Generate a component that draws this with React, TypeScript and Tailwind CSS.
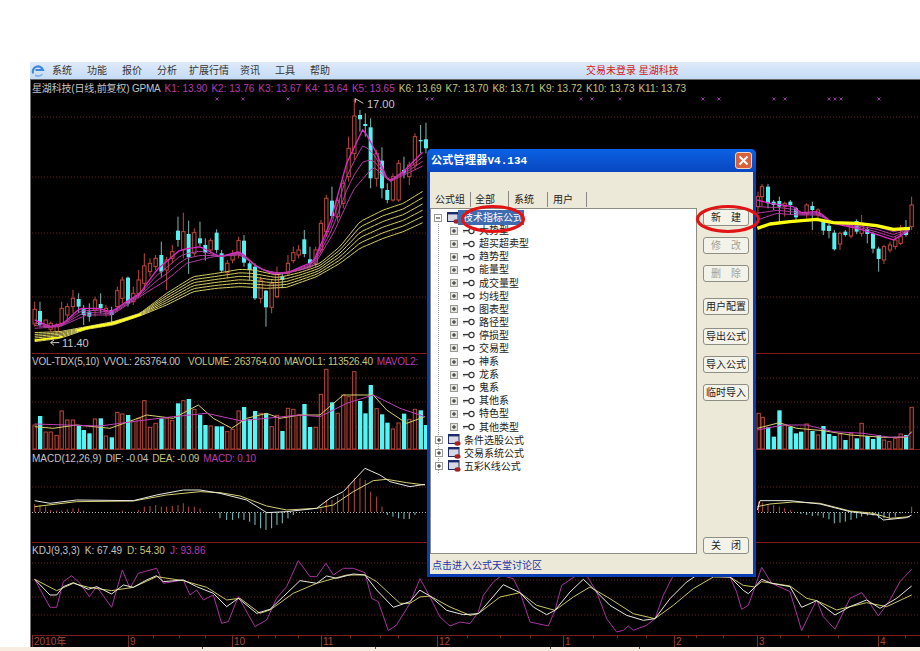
import React from "react";

// chart data is kept in a 3x grid so the small wicks and bars stay whole numbers
type Candle = [number, number, number, number, number]; // x, wick top, body top, body bottom, wick bottom
type Bar = [number, number]; // x, top

const redCandlesLeft: Candle[] = [
  [104, 755, 778, 822, 830], [137, 810, 810, 830, 835], [152, 815, 820, 838, 845], [170, 820, 825, 845, 850],
  [185, 755, 775, 820, 830], [202, 760, 770, 795, 815], [219, 720, 745, 770, 790], [285, 740, 750, 780, 800],
  [318, 765, 775, 785, 800], [352, 710, 722, 770, 785], [367, 680, 690, 745, 760], [400, 710, 730, 755, 765],
  [416, 660, 690, 730, 745], [433, 610, 648, 700, 720], [450, 625, 640, 665, 680], [467, 615, 625, 650, 660],
  [500, 620, 630, 660, 720], [517, 585, 605, 625, 640], [550, 488, 545, 600, 625], [583, 535, 548, 610, 620],
  [632, 565, 572, 600, 610], [682, 630, 640, 668, 685], [698, 600, 610, 630, 640], [716, 560, 572, 610, 625],
  [782, 680, 690, 745, 760], [815, 690, 700, 772, 790], [831, 650, 672, 740, 745], [864, 615, 640, 670, 675],
  [880, 590, 608, 632, 640], [896, 585, 600, 615, 625], [947, 590, 600, 640, 650], [963, 510, 520, 600, 610],
  [979, 435, 445, 545, 560], [1013, 440, 452, 500, 515], [1030, 390, 400, 460, 475], [1046, 260, 295, 380, 395],
  [1063, 145, 198, 310, 330], [1130, 300, 310, 385, 410], [1179, 370, 380, 450, 455], [1196, 330, 340, 450, 455],
  [1228, 335, 345, 380, 405], [1245, 250, 260, 345, 360],
];

const cyanCandlesLeft: Candle[] = [
  [120, 755, 783, 825, 830], [236, 730, 747, 770, 790], [251, 765, 778, 795, 825], [268, 760, 785, 800, 815],
  [302, 730, 762, 775, 790], [335, 770, 780, 795, 820], [384, 680, 683, 760, 770], [484, 575, 615, 665, 680],
  [534, 500, 542, 570, 590], [566, 512, 552, 622, 672], [600, 515, 565, 580, 590], [616, 565, 585, 608, 632],
  [650, 538, 548, 600, 610], [665, 600, 610, 662, 668], [732, 555, 572, 638, 650], [749, 630, 640, 660, 690],
  [765, 640, 650, 745, 750], [798, 720, 722, 772, 830], [847, 672, 680, 690, 715], [913, 540, 568, 612, 622],
  [930, 590, 628, 640, 650], [996, 410, 452, 498, 505], [1080, 180, 195, 208, 245], [1096, 190, 222, 228, 260],
  [1112, 205, 232, 385, 415], [1146, 292, 332, 415, 445], [1162, 400, 420, 450, 460], [1212, 320, 360, 370, 385],
  [1262, 225, 270, 272, 310], [1278, 218, 268, 295, 310],
];

const redCandlesRight: Candle[] = [
  [24, 395, 410, 440, 460], [36, 372, 380, 410, 440], [104, 425, 430, 440, 470], [170, 430, 435, 460, 475],
  [204, 445, 450, 465, 480], [270, 515, 520, 552, 570], [303, 490, 495, 528, 535], [335, 465, 490, 520, 530],
  [402, 555, 560, 600, 612], [420, 545, 555, 570, 578], [436, 530, 540, 560, 568], [452, 495, 530, 550, 555],
  [485, 410, 435, 500, 510],
];

const cyanCandlesRight: Candle[] = [
  [54, 372, 380, 430, 445], [71, 420, 425, 435, 450], [88, 410, 423, 440, 485], [121, 420, 425, 435, 465],
  [138, 440, 445, 472, 480], [187, 425, 438, 450, 510], [220, 480, 485, 512, 525], [237, 490, 497, 513, 535],
  [253, 510, 518, 568, 572], [286, 510, 515, 525, 530], [320, 478, 483, 515, 522], [352, 500, 507, 522, 550],
  [369, 515, 520, 566, 580], [386, 560, 566, 597, 635], [468, 480, 515, 525, 530],
];

const volRedLeft: Bar[] = [
  [104, 225], [137, 246], [152, 246], [170, 256], [185, 183], [202, 210], [219, 210], [285, 207], [318, 258],
  [352, 187], [367, 192], [400, 214], [416, 205], [433, 152], [450, 232], [467, 220], [500, 205], [517, 212],
  [550, 152], [583, 178], [632, 228], [682, 245], [698, 238], [716, 183], [782, 190], [815, 230], [831, 196],
  [864, 175], [880, 178], [896, 195], [947, 232], [963, 133], [979, 58], [1013, 190], [1030, 135], [1046, 140],
  [1063, 65], [1130, 176], [1179, 237], [1196, 219], [1228, 208], [1245, 178],
];

const volCyanLeft: Bar[] = [
  [120, 198], [236, 225], [251, 240], [268, 250], [302, 205], [335, 262], [384, 195], [484, 205], [534, 160],
  [566, 147], [600, 195], [616, 225], [650, 229], [665, 229], [732, 171], [749, 207], [765, 183], [798, 190],
  [847, 243], [913, 162], [930, 231], [996, 157], [1080, 153], [1096, 190], [1112, 105], [1146, 193], [1162, 218],
  [1212, 191], [1262, 181], [1278, 225],
];

const volRedRight: Bar[] = [
  [26, 190], [38, 202], [104, 225], [170, 222], [204, 255], [270, 252], [303, 250], [335, 220], [402, 270],
  [418, 275], [436, 265], [452, 252], [485, 172],
];

const volCyanRight: Bar[] = [
  [54, 232], [71, 260], [88, 181], [121, 230], [138, 250], [153, 245], [187, 243], [220, 228], [237, 252],
  [253, 258], [286, 270], [320, 265], [352, 258], [369, 267], [386, 255], [468, 255],
];

const macdRedLeft: Bar[] = [
  [104, 462], [120, 465], [137, 470], [152, 480], [170, 482], [185, 482], [202, 478], [219, 475], [236, 475],
  [251, 482], [268, 485], [367, 482], [416, 480], [433, 470], [450, 468], [467, 465], [484, 470], [500, 470],
  [517, 468], [534, 465], [550, 460], [566, 470], [583, 470], [600, 475], [963, 475], [979, 450], [996, 450],
  [1013, 440], [1030, 430], [1046, 405], [1063, 385], [1080, 385], [1096, 390], [1112, 425], [1130, 440], [1146, 470],
];

const macdCyanLeft: Bar[] = [
  [660, 505], [680, 510], [698, 510], [716, 505], [732, 510], [749, 515], [765, 525], [782, 535], [798, 540],
  [815, 535], [831, 525], [847, 520], [864, 505], [880, 495], [1162, 495], [1179, 500], [1196, 505], [1212, 507],
  [1228, 507], [1245, 495],
];

const macdRedRight: Bar[] = [[26, 455], [38, 458], [54, 462], [71, 465], [88, 470], [104, 475], [121, 480], [485, 470]];

const macdCyanRight: Bar[] = [
  [153, 492], [170, 495], [187, 498], [204, 497], [220, 503], [237, 508], [253, 520], [270, 518], [286, 515],
  [303, 510], [320, 505], [335, 500], [352, 497], [369, 497], [386, 505], [402, 505], [418, 505], [436, 500], [452, 490],
];

const yellowTop = [104, 848, 180, 845, 260, 830, 340, 815, 420, 790, 500, 730, 580, 680, 650, 670, 720, 658, 760, 660, 830, 675, 900, 660, 960, 640, 1020, 590, 1080, 515, 1150, 480, 1210, 460, 1275, 420];
const yellowBottom = [104, 875, 180, 865, 260, 838, 340, 825, 420, 798, 500, 765, 580, 725, 650, 715, 720, 710, 800, 715, 860, 712, 950, 680, 1020, 640, 1080, 595, 1150, 565, 1210, 545, 1275, 515];
const maFast = [104, 810, 150, 830, 190, 820, 240, 775, 290, 775, 335, 785, 380, 755, 420, 730, 470, 660, 540, 600, 600, 590, 660, 620, 720, 605, 770, 650, 820, 672, 870, 665, 940, 635, 990, 520, 1040, 340, 1090, 235, 1130, 310, 1165, 395, 1210, 365, 1275, 300];
const maSlow = [104, 835, 180, 830, 260, 795, 335, 795, 420, 740, 500, 690, 560, 640, 640, 620, 720, 615, 790, 660, 850, 672, 940, 650, 1000, 550, 1060, 420, 1120, 350, 1170, 395, 1275, 345];
const maFastRight = [22, 420, 60, 430, 130, 440, 150, 458, 205, 455, 250, 490, 320, 505, 370, 520, 430, 540, 480, 510];
const maSlowRight = [22, 480, 80, 460, 140, 465, 205, 465, 250, 488, 320, 492, 380, 500, 430, 515, 480, 505];
const yellowRight = [22, 505, 60, 492, 120, 485, 200, 478, 250, 488, 320, 490, 380, 497, 430, 508, 480, 505];

const kdjLeft = {
  j: [104, 688, 150, 772, 170, 772, 190, 695, 215, 677, 240, 700, 268, 740, 290, 710, 335, 772, 367, 660, 390, 715, 415, 670, 470, 655, 490, 700, 550, 690, 570, 735, 590, 720, 610, 750, 640, 735, 665, 820, 685, 815, 715, 740, 765, 830, 800, 810, 830, 745, 860, 710, 895, 632, 930, 680, 950, 680, 978, 640, 1000, 675, 1030, 655, 1060, 655, 1095, 668, 1115, 745, 1135, 755, 1165, 842, 1190, 825, 1230, 760, 1260, 686],
  k: [104, 688, 150, 735, 170, 735, 190, 710, 220, 698, 265, 718, 290, 710, 335, 732, 370, 705, 400, 712, 440, 690, 470, 677, 490, 695, 550, 690, 590, 710, 640, 730, 680, 770, 715, 745, 770, 790, 810, 778, 850, 740, 900, 692, 950, 700, 980, 678, 1010, 685, 1060, 672, 1095, 675, 1130, 720, 1180, 772, 1230, 755, 1260, 720],
  d: [104, 688, 170, 722, 220, 700, 265, 712, 335, 722, 400, 712, 470, 680, 550, 692, 620, 712, 680, 750, 720, 745, 780, 790, 810, 780, 880, 730, 950, 700, 1040, 675, 1095, 675, 1130, 695, 1200, 760, 1230, 760, 1260, 741],
};

const kdjMiddle = {
  j: [0, 20, 30, 75, 60, 135, 90, 162, 120, 150, 150, 155, 175, 120, 190, 70, 220, 30, 245, 10, 280, 20, 300, 60, 330, 150, 385, 162, 405, 115, 425, 40, 470, 10, 500, 10, 530, 60, 560, 140, 590, 180, 610, 175, 625, 162, 640, 175, 680, 160, 705, 140, 730, 70, 760, 10, 930, 15, 950, 60, 965, 112, 985, 100, 1005, 45],
  k: [0, 55, 30, 72, 80, 115, 130, 128, 175, 125, 210, 85, 250, 38, 300, 62, 340, 105, 380, 128, 405, 115, 450, 60, 490, 22, 520, 50, 570, 100, 620, 130, 670, 145, 705, 140, 750, 80, 800, 30, 830, 10, 930, 15, 970, 55, 985, 65, 1005, 45],
  d: [0, 75, 30, 72, 90, 105, 150, 130, 175, 125, 240, 75, 300, 62, 350, 100, 405, 115, 460, 75, 510, 45, 570, 80, 640, 125, 705, 140, 760, 100, 820, 50, 880, 15, 930, 15, 970, 40, 1005, 45],
};

const kdjRight = {
  j: [15, 711, 35, 652, 65, 700, 120, 725, 155, 842, 175, 800, 200, 750, 220, 800, 255, 838, 300, 745, 335, 728, 360, 760, 385, 798, 420, 750, 450, 695, 485, 658],
  k: [15, 711, 35, 688, 65, 700, 120, 710, 155, 772, 200, 752, 255, 795, 300, 770, 350, 750, 390, 775, 440, 745, 485, 708],
  d: [15, 711, 35, 695, 120, 708, 170, 745, 200, 752, 260, 780, 350, 758, 410, 770, 485, 735],
};

const crossMarks = [217, 243, 288, 427, 432, 581, 592, 620, 703, 719, 774, 785, 829, 835, 841, 879];
const monthMarks: [number, string][] = [[128, "9"], [232, "10"], [321, "11"], [437, "12"], [563, "1"], [674, "2"], [757, "3"], [878, "4"]];
const axisTicks = [153, 179, 205, 258, 275, 298, 350, 380, 398, 467, 500, 530, 593, 617, 646, 696, 723, 780, 808, 838, 905];

const pts = (flat: number[]) => flat.reduce((s, v, i) => s + (i % 2 ? "," : " ") + v, "").trim();

// y of a polyline at x, used to fan a ribbon of averages between two curves
const yAt = (flat: number[], x: number) => {
  for (let i = 0; i < flat.length - 2; i += 2) {
    if (x <= flat[i + 2]) {
      const t = Math.max(0, (x - flat[i]) / (flat[i + 2] - flat[i]));
      return flat[i + 1] + (flat[i + 3] - flat[i + 1]) * t;
    }
  }
  return flat[flat.length - 1];
};

const ribbon = (a: number[], b: number[], t: number, from: number, to: number) => {
  const out: number[] = [];
  for (let x = from; x <= to; x += 12) out.push(x, yAt(a, x) + (yAt(b, x) - yAt(a, x)) * t);
  return out;
};

const Line = ({ d, color, w = 3 }: { d: number[]; color: string; w?: number }) => (
  <polyline points={pts(d)} fill="none" stroke={color} strokeWidth={w} strokeLinejoin="round" />
);

const Candles = ({ red, cyan }: { red: Candle[]; cyan: Candle[] }) => (
  <>
    {red.map(([x, wt, bt, bb, wb]) => (
      <g key={x}>
        <line x1={x} x2={x} y1={wt} y2={wb} stroke="#c04a3a" strokeWidth={3} />
        <rect x={x - 5} y={bt} width={10} height={bb - bt} fill="#000" stroke="#c04a3a" strokeWidth={3} />
      </g>
    ))}
    {cyan.map(([x, wt, bt, bb, wb]) => (
      <g key={x}>
        <line x1={x} x2={x} y1={wt} y2={wb} stroke="#7fb8b8" strokeWidth={3} />
        <rect x={x - 6} y={bt} width={12} height={Math.max(bb - bt, 4)} fill="#55f0f0" />
      </g>
    ))}
  </>
);

const VolBars = ({ red, cyan }: { red: Bar[]; cyan: Bar[] }) => (
  <>
    {red.map(([x, top]) => (
      <rect key={x} x={x - 5} y={top} width={10} height={297 - top} fill="#140404" stroke="#b84a3a" strokeWidth={3} />
    ))}
    {cyan.map(([x, top]) => (
      <rect key={x} x={x - 6} y={top} width={13} height={298 - top} fill="#55f5f5" />
    ))}
  </>
);

const MacdBars = ({ red, cyan }: { red: Bar[]; cyan: Bar[] }) => (
  <>
    {red.map(([x, top]) => (
      <line key={x} x1={x} x2={x} y1={top} y2={487} stroke="#b84a3a" strokeWidth={3} />
    ))}
    {cyan.map(([x, end]) => (
      <line key={x} x1={x} x2={x} y1={487} y2={end} stroke="#7fc8c8" strokeWidth={3} />
    ))}
  </>
);

const Kdj = ({ data }: { data: { j: number[]; k: number[]; d: number[] } }) => (
  <>
    <Line d={data.j} color="#a834a0" />
    <Line d={data.d} color="#c8c860" />
    <Line d={data.k} color="#e8e8e0" />
  </>
);

const Dotted = ({ y }: { y: number }) => <line x1={32} x2={920} y1={y} y2={y} stroke="#6a1c1c" strokeWidth={1} strokeDasharray="1 2" />;

// one stacked indicator area: caption in flow, chart drawn behind it in window coordinates
const Pane = ({ top, height, caption, children }: { top: number; height: number; caption?: React.ReactNode; children: React.ReactNode }) => (
  <div className="relative shrink-0 text-[10px] leading-[13px]" style={{ height }}>
    <svg className="absolute inset-0 w-[889px]" viewBox={`31 ${top} 889 ${height}`} height={height}>
      {children}
    </svg>
    {caption && <div className="relative flex gap-[4px] pl-[1px] pt-[2px] whitespace-nowrap">{caption}</div>}
  </div>
);

const GREY = "text-[#c4c4c4]";
const PINK = "text-[#b83cb0]";
const OLIVE = "text-[#c6c67a]";
const TIGHT = "tracking-[-0.18px]";

const IconApp = () => (
  <svg width="14" height="14" viewBox="0 0 14 14" fill="none">
    <path d="M2 9.5A5.2 5.2 0 1 1 12 6H4.5" stroke="#3f86dc" strokeWidth="2.2" />
    <path d="M4 11.2c2.6 1.4 5.4 1 7.4-1" stroke="#79aee8" strokeWidth="1.6" />
  </svg>
);

const Expander = ({ soft }: { soft?: boolean }) => (
  <svg width="8" height="8" viewBox="0 0 8 8" className="shrink-0">
    <rect x=".5" y=".5" width="7" height="7" fill={soft ? "#e4e4e0" : "#fff"} stroke="#9a9a94" />
    <path d="M2 4h4M4 2v4" stroke="#222" />
  </svg>
);

const GroupIcon = () => (
  <svg width="13" height="12" viewBox="0 0 13 12" className="shrink-0">
    <rect x=".5" y=".5" width="10.5" height="9" fill="#d8d8e4" stroke="#1c2a68" />
    <rect x="0" y="0" width="11" height="2.4" fill="#1c2a68" />
    <ellipse cx="9.5" cy="9.5" rx="3" ry="2.2" fill="#a52020" />
  </svg>
);

const KeyIcon = () => (
  <svg width="12" height="8" viewBox="0 0 12 8" className="shrink-0" fill="none">
    <circle cx="8.5" cy="4" r="2.6" stroke="#333" strokeWidth="1.1" />
    <path d="M0 3.6h6" stroke="#333" strokeWidth="1.4" />
    <path d="M1 4.6v1" stroke="#333" />
  </svg>
);

const subGroups = ["大势型", "超买超卖型", "趋势型", "能量型", "成交量型", "均线型", "图表型", "路径型", "停损型", "交易型", "神系", "龙系", "鬼系", "其他系", "特色型", "其他类型"];
const otherGroups = ["条件选股公式", "交易系统公式", "五彩K线公式"];

const ToolButton = ({ label, disabled, className = "" }: { label: string; disabled?: boolean; className?: string }) => (
  <button className={`h-[17px] w-[46px] shrink-0 rounded-[3px] border border-[#8e8e84] bg-[#f4f3ea] text-[10px] leading-none ${disabled ? "text-[#a2a298]" : "text-[#222]"} ${className}`}>
    {label}
  </button>
);

const FormulaDialog = () => (
  <div className="absolute left-[427px] top-[149px] flex h-[428px] w-[329px] flex-col rounded-t-[5px] border-x-[3px] border-b-[3px] border-[#0c3cb4] bg-[#ece9d8]">
    <div className="-mx-[3px] flex h-[23px] shrink-0 items-center justify-between rounded-t-[5px] bg-gradient-to-b from-[#0a62e4] to-[#0a46c0] pl-[4px] pr-[4px]">
      <span className="text-[11px] font-bold tracking-[0.3px] text-white">
        公式管理器<span className="[font-family:'Liberation_Mono',monospace] tracking-normal">V4.134</span>
      </span>
      <span className="flex h-[17px] w-[17px] items-center justify-center rounded-[3px] border border-[#f0d8c8] bg-[#d8603c]">
        <svg width="11" height="11" viewBox="0 0 11 11">
          <path d="M1.5 1.5l8 8M9.5 1.5l-8 8" stroke="#fff" strokeWidth="2" />
        </svg>
      </span>
    </div>

    <div className="flex pt-[18px]">
      <div className="w-[267px] shrink-0">
        <div className="flex h-[18px] items-center text-[10px] text-[#222]">
          <span className="w-[41px] border-r border-[#888] pl-[5px]">公式组</span>
          <span className="w-[38px] border-r border-[#888] pl-[4px] pt-[1px]">全部</span>
          <span className="w-[39px] border-r border-[#888] pl-[5px]">系统</span>
          <span className="w-[39px] border-r border-[#888] pl-[5px]">用户</span>
        </div>
        <div className="h-[346px] border border-[#8c8c84] bg-white pt-[2px] text-[10px] text-[#222]">
          <div className="pl-[3px]">
            <div className="flex h-[13.1px] items-center">
              <span className="flex items-center">
                <svg width="8" height="8" viewBox="0 0 8 8" className="shrink-0">
                  <rect x=".5" y=".5" width="7" height="7" fill="#fff" stroke="#9a9a94" />
                  <path d="M2 4h4" stroke="#222" />
                </svg>
              </span>
              <span className="ml-[5px]"><GroupIcon /></span>
              <span className="ml-[-2px] bg-[#3d6cb0] pl-[5px] pr-[1px] text-white">技术指标公式</span>
            </div>
            <div className="ml-[4px] border-l border-dotted border-[#999] pl-[11px]">
              {subGroups.map((name) => (
                <div key={name} className="flex h-[13.1px] items-center">
                  <Expander soft />
                  <span className="ml-[5px]"><KeyIcon /></span>
                  <span className="ml-[4px]">{name}</span>
                </div>
              ))}
              <div className="-ml-[15px] -mr-[1px]">
                {otherGroups.map((name) => (
                  <div key={name} className="flex h-[13.1px] items-center">
                    <Expander />
                    <span className="ml-[5px]"><GroupIcon /></span>
                    <span className="ml-[3px]">{name}</span>
                  </div>
                ))}
              </div>
            </div>
          </div>
        </div>
      </div>

      <div className="ml-[6px] flex h-[364px] flex-col pt-[19px]">
        <ToolButton label="新　建" />
        <ToolButton label="修　改" disabled className="mt-[11px]" />
        <ToolButton label="删　除" disabled className="mt-[11px]" />
        <ToolButton label="用户配置" className="mt-[16px]" />
        <ToolButton label="导出公式" className="mt-[13px]" />
        <ToolButton label="导入公式" className="mt-[11px]" />
        <ToolButton label="临时导入" className="mt-[11px]" />
        <ToolButton label="关　闭" className="mt-auto" />
      </div>
    </div>

    <div className="pl-[2px] pt-[4px] text-[10px] text-[#2232a8]">点击进入公式天堂讨论区</div>
  </div>
);

const Ring = ({ className }: { className: string }) => (
  <svg className={`absolute ${className}`} width="66" height="30" viewBox="0 0 66 30" fill="none">
    <ellipse cx="33" cy="15" rx="30.5" ry="12.5" stroke="#e01414" strokeWidth="3.2" />
  </svg>
);

export default function App() {
  const fan = [0, 0.2, 0.4, 0.6, 0.8, 1];
  const pink = [0, 0.33, 0.66, 1];
  return (
    <div className="relative h-[651px] w-[920px] overflow-hidden bg-white pl-[30px] pt-[62px] [font-family:'Liberation_Sans','Noto_Sans_CJK_SC',sans-serif]">
      <div className="flex h-[18px] items-center border-b border-[#666] bg-gradient-to-b from-[#dfeafa] to-[#c4dbf6] pl-[1px] text-[10px] text-[#333]">
        <span className="w-[21px]"><IconApp /></span>
        <nav className="flex gap-[15px]">
          <span>系统</span>
          <span>功能</span>
          <span>报价</span>
          <span className="mr-[-3px]">分析</span>
          <span className="mr-[-4px]">扩展行情</span>
          <span>资讯</span>
          <span>工具</span>
          <span>帮助</span>
        </nav>
        <span className="ml-[256px] text-[#d02020]">交易未登录 星湖科技</span>
      </div>

      <div className="flex h-[567px] flex-col border-l border-[#777] bg-black">
        <Pane
          top={80}
          height={273}
          caption={
            <>
              <span className={`${GREY} ${TIGHT}`}>星湖科技(日线,前复权) GPMA</span>
              {[["K1", "13.90"], ["K2", "13.76"], ["K3", "13.67"], ["K4", "13.64"], ["K5", "13.65"]].map(([k, v]) => (
                <span key={k} className={PINK}>{k}: {v}</span>
              ))}
              {[["K6", "13.69"], ["K7", "13.70"], ["K8", "13.71"], ["K9", "13.72"], ["K10", "13.73"], ["K11", "13.73"]].map(([k, v]) => (
                <span key={k} className={OLIVE}>{k}: {v}</span>
              ))}
            </>
          }
        >
          {[117, 177, 233, 297].map((y) => <Dotted key={y} y={y} />)}
          {crossMarks.map((x) => (
            <path key={x} d={`M${x - 1.5} 97.5l3 3m0-3l-3 3`} stroke="#8e3a98" strokeWidth={1} />
          ))}
          <g transform="translate(0 50) scale(.3333)">
            <Candles red={redCandlesLeft} cyan={cyanCandlesLeft} />
            {fan.map((t) => (
              <Line key={t} d={ribbon(yellowTop, yellowBottom, t, 104, 1275)} color="#d8d060" />
            ))}
            <Line d={ribbon(yellowTop, yellowBottom, 0.5, 230, 430)} color="#ffff20" w={7} />
            <Line d={ribbon(yellowTop, yellowBottom, 0.85, 104, 190)} color="#ffff20" w={5} />
            {pink.map((t) => (
              <Line key={t} d={ribbon(maFast, maSlow, t, 104, 1275)} color={t === 0 ? "#e028c8" : "#b83ca8"} w={t === 0 ? 4 : 3} />
            ))}
            <path d="M1090 160l-24-14v12" stroke="#ccc" strokeWidth={3} fill="none" />
            <path d="M178 878h-26m10-8l-10 8 10 8" stroke="#ccc" strokeWidth={3} fill="none" />
          </g>
          <g transform="translate(750 60) scale(.3333)">
            <Candles red={redCandlesRight} cyan={cyanCandlesRight} />
            {pink.map((t) => (
              <Line key={t} d={ribbon(maFastRight, maSlowRight, t, 22, 480)} color={t === 0 ? "#e028c8" : "#b83ca8"} w={t === 0 ? 4 : 3} />
            ))}
            <Line d={yellowRight} color="#ffff10" w={10} />
          </g>
          <text x={367} y={108} fill="#c8c8c8" fontSize={11}>17.00</text>
          <text x={62} y={347} fill="#c8c8c8" fontSize={11}>11.40</text>
        </Pane>

        <Pane
          top={353}
          height={97}
          caption={
            <>
              <span className={`${GREY} ${TIGHT}`}>VOL-TDX(5,10)</span>
              <span className={`${GREY} ${TIGHT} mr-[4px]`}>VVOL: 263764.00</span>
              <span className={`${OLIVE} ${TIGHT}`}>VOLUME: 263764.00</span>
              <span className={`${OLIVE} ${TIGHT}`}>MAVOL1: 113526.40</span>
              <span className={`${PINK} ${TIGHT}`}>MAVOL2:</span>
            </>
          }
        >
          <line x1={32} x2={920} y1={353.5} y2={353.5} stroke="#7a1c1c" />
          <line x1={32} x2={920} y1={449.5} y2={449.5} stroke="#7a1c1c" />
          {[378, 402, 427].map((y) => <Dotted key={y} y={y} />)}
          <g transform="translate(0 350) scale(.3333)">
            <VolBars red={volRedLeft} cyan={volCyanLeft} />
            <Line d={[104, 230, 160, 235, 230, 225, 330, 235, 400, 210, 440, 195, 520, 205, 595, 165, 640, 205, 695, 235, 740, 205, 800, 190, 840, 205, 900, 195, 960, 195, 1030, 135, 1120, 135, 1160, 180, 1220, 220, 1275, 200]} color="#d8d070" />
            <Line d={[104, 222, 200, 225, 300, 228, 420, 212, 520, 200, 620, 190, 720, 212, 800, 205, 900, 195, 960, 200, 1040, 160, 1120, 135, 1200, 175, 1275, 200]} color="#c040b8" />
          </g>
          <g transform="translate(750 350) scale(.3333)">
            <VolBars red={volRedRight} cyan={volCyanRight} />
            <Line d={[22, 235, 88, 218, 140, 235, 220, 242, 300, 255, 400, 262, 470, 262, 485, 245]} color="#d8d070" />
            <Line d={[22, 240, 100, 225, 170, 225, 250, 245, 340, 250, 420, 262, 470, 260, 485, 248]} color="#c040b8" />
          </g>
        </Pane>

        <Pane
          top={450}
          height={92}
          caption={
            <>
              <span className={`${GREY}`}>MACD(12,26,9)</span>
              <span className={`${GREY} ${TIGHT}`}>DIF: -0.04</span>
              <span className={`${OLIVE} ${TIGHT}`}>DEA: -0.09</span>
              <span className={`${PINK} ${TIGHT}`}>MACD: 0.10</span>
            </>
          }
        >
          <Dotted y={487} />
          <line x1={32} x2={920} y1={512.5} y2={512.5} stroke="#bbb" strokeDasharray="1 2" />
          <g transform="translate(0 350) scale(.3333)">
            <MacdBars red={macdRedLeft} cyan={macdCyanLeft} />
            <Line d={[104, 470, 230, 455, 400, 453, 500, 435, 600, 425, 660, 428, 720, 438, 800, 468, 860, 480, 950, 475, 1000, 465, 1060, 425, 1120, 392, 1160, 388, 1220, 398, 1275, 405]} color="#d8d070" />
            <Line d={[104, 452, 150, 460, 230, 450, 400, 452, 470, 435, 550, 420, 600, 420, 660, 430, 740, 450, 800, 488, 860, 485, 950, 475, 990, 445, 1030, 425, 1095, 355, 1140, 375, 1170, 395, 1230, 410, 1275, 403]} color="#e8e8e0" />
          </g>
          <g transform="translate(750 350) scale(.3333)">
            <MacdBars red={macdRedRight} cyan={macdCyanRight} />
            <Line d={[22, 470, 60, 462, 130, 456, 210, 460, 300, 483, 370, 490, 420, 505, 480, 500]} color="#d8d070" />
            <Line d={[22, 480, 30, 452, 120, 452, 210, 462, 300, 485, 380, 495, 400, 510, 470, 503, 485, 495]} color="#e8e8e0" />
          </g>
        </Pane>

        <Pane
          top={542}
          height={93}
          caption={
            <>
              <span className={`${GREY} mr-[1px]`}>KDJ(9,3,3)</span>
              <span className={`${GREY} mr-[1px]`}>K: 67.49</span>
              <span className={`${OLIVE} mr-[1px]`}>D: 54.30</span>
              <span className={PINK}>J: 93.86</span>
            </>
          }
        >
          <line x1={32} x2={920} y1={542.5} y2={542.5} stroke="#7a1c1c" />
          {[563, 580, 597, 615].map((y) => <Dotted key={y} y={y} />)}
          <g transform="translate(0 350) scale(.3333)"><Kdj data={kdjLeft} /></g>
          <g transform="translate(420 572) scale(.3333)"><Kdj data={kdjMiddle} /></g>
          <g transform="translate(750 350) scale(.3333)"><Kdj data={kdjRight} /></g>
        </Pane>

        <Pane top={635} height={12}>
          <line x1={32} x2={920} y1={635.5} y2={635.5} stroke="#7a1c1c" />
          <line x1={32.5} x2={32.5} y1={635} y2={647} stroke="#7a2c20" />
          <text x={34} y={645} fill="#a84a34" fontSize={10}>2010年</text>
          {axisTicks.map((x) => (
            <line key={x} x1={x + 0.5} x2={x + 0.5} y1={635} y2={638} stroke="#7a2c20" />
          ))}
          {monthMarks.map(([x, label]) => (
            <g key={label}>
              <line x1={x + 0.5} x2={x + 0.5} y1={635} y2={647} stroke="#7a2c20" />
              <text x={x + 2} y={645} fill="#a84a34" fontSize={10}>{label}</text>
            </g>
          ))}
        </Pane>
      </div>

      <div className="relative h-[4px] -ml-[30px] bg-[#f8ebe0]">
        {[202, 375, 550, 639].map((x) => (
          <span key={x} className="absolute top-0 h-[2px] w-px bg-[#555]" style={{ left: x }} />
        ))}
      </div>

      <FormulaDialog />
      <Ring className="left-[460px] top-[204px]" />
      <Ring className="left-[695px] top-[204px]" />
    </div>
  );
}
